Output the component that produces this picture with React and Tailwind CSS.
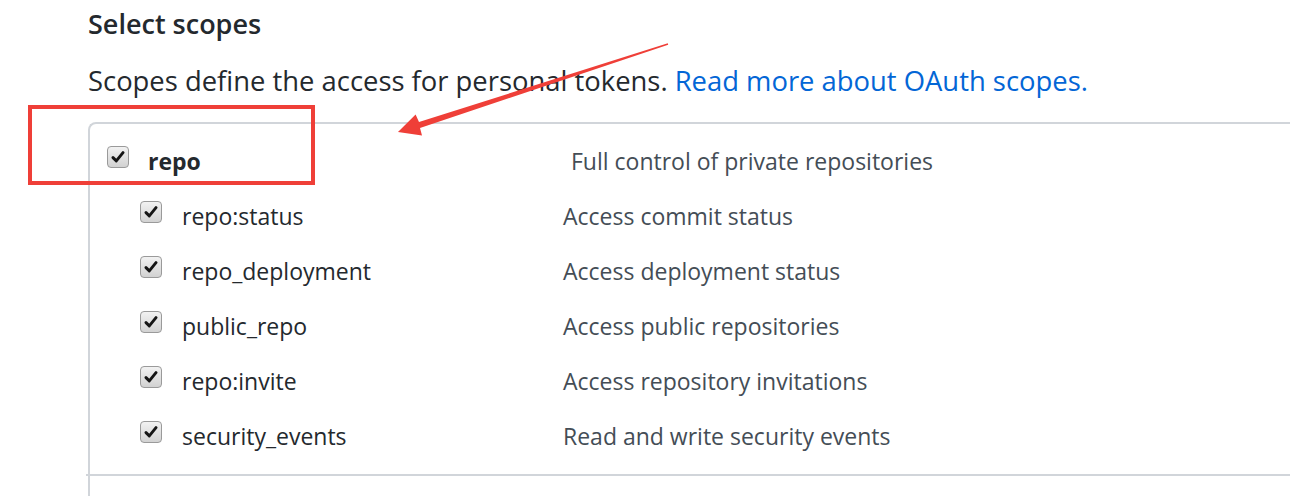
import React from "react";

const scopes = [
  { name: "repo:status", desc: "Access commit status" },
  { name: "repo_deployment", desc: "Access deployment status" },
  { name: "public_repo", desc: "Access public repositories" },
  { name: "repo:invite", desc: "Access repository invitations" },
  { name: "security_events", desc: "Read and write security events" },
];

const CheckBox = () => (
  <div className="flex items-center justify-center w-[22px] h-[22px] mb-[10px] shrink-0 rounded-[4px] border border-[#9a9a9a] bg-gradient-to-b from-[#f2f2f2] to-[#d2d2d2]">
    <svg width="14" height="14" viewBox="0 0 14 14">
      <path d="M2 7.6 L5.3 10.9 L12 2.6" fill="none" stroke="#151515" strokeWidth="2.9" strokeLinecap="round" strokeLinejoin="round" />
    </svg>
  </div>
);

const App = () => {
  return (
    <div className="relative w-[1290px] h-[496px] overflow-hidden bg-white font-['Open_Sans',sans-serif] text-[#24292e]">
      <div className="pl-[88px] pt-[8px]">
        <h2 className="text-[27px] leading-[32px] font-semibold">Select scopes</h2>
        <p className="mt-[25px] text-[27.4px] leading-[32px]">
          Scopes define the access for personal tokens.{" "}
          <a className="text-[#0366d6]">Read more about OAuth scopes.</a>
        </p>

        <div className="mt-[25px] h-[400px] border-l-2 border-t-2 border-[#d1d5da] rounded-tl-[8px]">
          <div className="flex items-center h-[55px] mt-[10px] pl-[17px]">
            <CheckBox />
            <span className="ml-[19px] w-[423px] text-[23px] font-bold">repo</span>
            <span className="text-[23px] text-[#444d56]">Full control of private repositories</span>
          </div>

          {scopes.map((s) => (
            <div key={s.name} className="flex items-center h-[55px] pl-[50px]">
              <CheckBox />
              <span className="ml-[20px] w-[381px] text-[23px]">{s.name}</span>
              <span className="text-[23px] text-[#444d56]">{s.desc}</span>
            </div>
          ))}

          <div className="mt-[10px] -ml-[4px] border-t-2 border-[#d1d5da]"></div>
        </div>
      </div>

      {/* annotation */}
      <div className="absolute left-[28px] top-[105px] w-[287px] h-[80px] border-4 border-[#ef3f38]"></div>
      <svg className="absolute left-0 top-0" width="1290" height="496">
        <polygon
          points="667.8,43.2 419,122 415.6,114.5 398,132 422,135.5 420,128 668.2,44.8"
          fill="#ef3f38"
        />
      </svg>
    </div>
  );
};

export default App;
